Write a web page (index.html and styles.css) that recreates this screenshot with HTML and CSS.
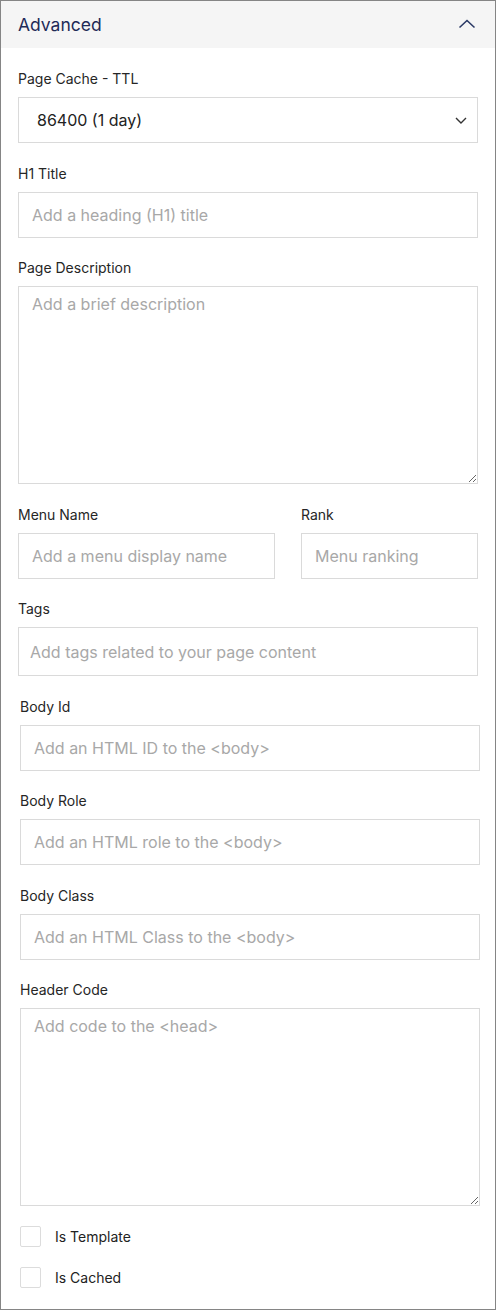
FILE: index.html
```html
<!DOCTYPE html>
<html>
<head>
<meta charset="utf-8">
<link rel="stylesheet" href="styles.css">
</head>
<body>
<div class="panel">
  <div class="panel-header">
    <span class="panel-title">Advanced</span>
    <svg class="collapse-icon" width="18" height="10" viewBox="0 0 18 10"><path d="M1.5 8.5 L9 1.5 L16.5 8.5" fill="none" stroke="#2b3a66" stroke-width="1.6"/></svg>
  </div>
  <div class="panel-body">
    <div class="field">
      <label class="field-label">Page Cache - TTL</label>
      <div class="select">
        <span>86400 (1 day)</span>
        <svg width="12" height="7" viewBox="0 0 12 7"><path d="M1 1 L6 6 L11 1" fill="none" stroke="#333" stroke-width="1.4"/></svg>
      </div>
    </div>
    <div class="field">
      <label class="field-label">H1 Title</label>
      <input class="input" type="text" placeholder="Add a heading (H1) title">
    </div>
    <div class="field">
      <label class="field-label">Page Description</label>
      <textarea class="input textarea" placeholder="Add a brief description"></textarea>
    </div>
    <div class="field-row">
      <div class="field menu-name">
        <label class="field-label">Menu Name</label>
        <input class="input" type="text" placeholder="Add a menu display name">
      </div>
      <div class="field rank">
        <label class="field-label">Rank</label>
        <input class="input" type="text" placeholder="Menu ranking">
      </div>
    </div>
    <div class="field">
      <label class="field-label">Tags</label>
      <input class="input tags" type="text" placeholder="Add tags related to your page content">
    </div>
    <div class="shifted">
      <div class="field">
        <label class="field-label">Body Id</label>
        <input class="input" type="text" placeholder="Add an HTML ID to the <body>">
      </div>
      <div class="field">
        <label class="field-label">Body Role</label>
        <input class="input" type="text" placeholder="Add an HTML role to the <body>">
      </div>
      <div class="field">
        <label class="field-label">Body Class</label>
        <input class="input" type="text" placeholder="Add an HTML Class to the <body>">
      </div>
      <div class="field">
        <label class="field-label">Header Code</label>
        <textarea class="input textarea" placeholder="Add code to the <head>"></textarea>
      </div>
      <div class="checks">
        <label class="check"><input type="checkbox" class="box"><span>Is Template</span></label>
        <label class="check"><input type="checkbox" class="box"><span>Is Cached</span></label>
      </div>
    </div>
  </div>
</div>
</body>
</html>
```
FILE: styles.css
```css
* { box-sizing: border-box; }
html, body { margin: 0; padding: 0; background: #fff; }
body { font-family: Inter, "Noto Sans", sans-serif; color: #222; }
.panel {
  width: 496px;
  height: 1310px;
  border: 1px solid #858585;
  background: #fff;
}
.panel-header {
  height: 47px;
  background: #f5f5f5;
  display: flex;
  align-items: center;
  justify-content: space-between;
  padding: 0 19px 0 17px;
}
.panel-title {
  font-size: 17.5px;
  color: #1e2b58;
}
.collapse-icon { margin-top: -2px; }
.panel-body {
  padding: 19px 17px 0 17px;
  display: flex;
  flex-direction: column;
  gap: 18.5px;
}
.shifted {
  margin: 0 -2px 0 2px;
  display: flex;
  flex-direction: column;
  gap: 18.5px;
}
.field { display: flex; flex-direction: column; }
.field-label {
  font-size: 14px;
  line-height: 20px;
  height: 20px;
  margin: 2px 0 8px 0;
  color: #262626;
}
.input {
  height: 46px;
  border: 1px solid #dadada;
  border-radius: 0;
  padding: 0 13px;
  font-family: Inter, "Noto Sans", sans-serif;
  font-size: 16px;
  color: #222;
  background: #fff;
  outline: none;
  width: 100%;
}
.input::placeholder { color: #a8a8a8; opacity: 1; }
.input.tags { height: 49px; padding-left: 11px; }
.textarea {
  height: 198px;
  padding-top: 6px;
  line-height: 22px;
  resize: vertical;
  display: block;
}
.select {
  height: 46px;
  border: 1px solid #dadada;
  display: flex;
  align-items: center;
  justify-content: space-between;
  padding: 0 10px 0 18px;
  font-size: 16px;
  color: #222;
}
.field-row {
  display: flex;
  gap: 26px;
}
.menu-name { width: 257px; }
.rank { flex: 1; }
.checks {
  display: flex;
  flex-direction: column;
  gap: 20px;
  padding-top: 1.5px;
}
.check {
  display: flex;
  align-items: center;
  height: 21px;
  font-size: 14px;
  color: #222;
}
.box {
  appearance: none;
  -webkit-appearance: none;
  width: 21px;
  height: 21px;
  margin: 0 14px 0 0;
  border: 1px solid #dcdcdc;
  border-radius: 2px;
  background: #fff;
}
```
